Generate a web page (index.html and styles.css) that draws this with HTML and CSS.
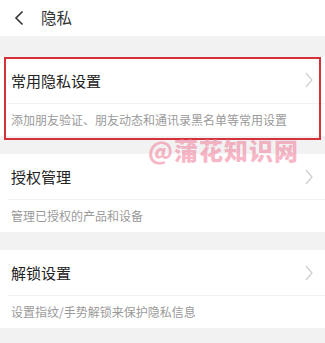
FILE: index.html
```html
<!DOCTYPE html>
<html lang="zh">
<head>
<meta charset="utf-8">
<link rel="stylesheet" href="styles.css">
</head>
<body>
<div class="page">
  <header class="header">
    <svg class="back" width="12" height="16" viewBox="0 0 12 16"><path d="M9.5 1.5 L3 8 L9.5 14.5" fill="none" stroke="#333" stroke-width="1.6"/></svg>
    <span class="htitle">隐私</span>
  </header>
  <section class="card first">
    <div class="row">
      <span class="title">常用隐私设置</span>
      <svg class="chev" width="8" height="16" viewBox="0 0 8 16"><path d="M1 1 L7 8 L1 15" fill="none" stroke="#cfcfcf" stroke-width="1.2"/></svg>
    </div>
    <div class="sub">添加朋友验证、朋友动态和通讯录黑名单等常用设置</div>
  </section>
  <section class="card">
    <div class="row">
      <span class="title">授权管理</span>
      <svg class="chev" width="8" height="16" viewBox="0 0 8 16"><path d="M1 1 L7 8 L1 15" fill="none" stroke="#cfcfcf" stroke-width="1.2"/></svg>
    </div>
    <div class="sub">管理已授权的产品和设备</div>
  </section>
  <section class="card">
    <div class="row">
      <span class="title">解锁设置</span>
      <svg class="chev" width="8" height="16" viewBox="0 0 8 16"><path d="M1 1 L7 8 L1 15" fill="none" stroke="#cfcfcf" stroke-width="1.2"/></svg>
    </div>
    <div class="sub">设置指纹/手势解锁来保护隐私信息</div>
  </section>
  <div class="watermark">@蒲花知识网</div>
</div>
</body>
</html>
```
FILE: styles.css
```css
* { box-sizing: border-box; }
html, body { margin: 0; padding: 0; }
body {
  width: 325px;
  height: 343px;
  overflow: hidden;
  background: #f2f2f2;
  font-family: "Noto Sans CJK SC", "Noto Sans", sans-serif;
}
.page {
  position: relative;
  display: flex;
  flex-direction: column;
  gap: 18px;
}
.header {
  height: 36px;
  background: #fff;
  display: flex;
  align-items: center;
  padding-left: 13px;
  margin-bottom: 3px;
}
.back { margin-right: 16px; }
.htitle {
  font-size: 15.5px;
  color: #333;
  line-height: 1;
}
.card {
  background: #fff;
  display: flex;
  flex-direction: column;
  padding-left: 8px;
  height: 78px;
}
.card.first {
  position: relative;
  height: 79px;
}
.card.first::after {
  content: "";
  position: absolute;
  left: 4px;
  top: 0;
  width: 313px;
  height: 79px;
  border: 2px solid #d4313b;
}
.row {
  height: 46px;
  display: flex;
  align-items: center;
  justify-content: space-between;
  padding-left: 3px;
  padding-right: 12px;
  border-bottom: 1px solid #f1f1f1;
}
.first .row { height: 47px; }
.title {
  font-size: 15px;
  color: #222;
  line-height: 1;
}
.sub {
  flex: 1;
  display: flex;
  align-items: center;
  padding-left: 3px;
  font-size: 12px;
  color: #9a9a9a;
  line-height: 1;
}
.watermark {
  position: absolute;
  left: 148px;
  top: 137px;
  font-size: 24px;
  font-weight: 900;
  color: rgba(240, 120, 150, 0.55);
  letter-spacing: 1px;
  line-height: 26px;
}
```
